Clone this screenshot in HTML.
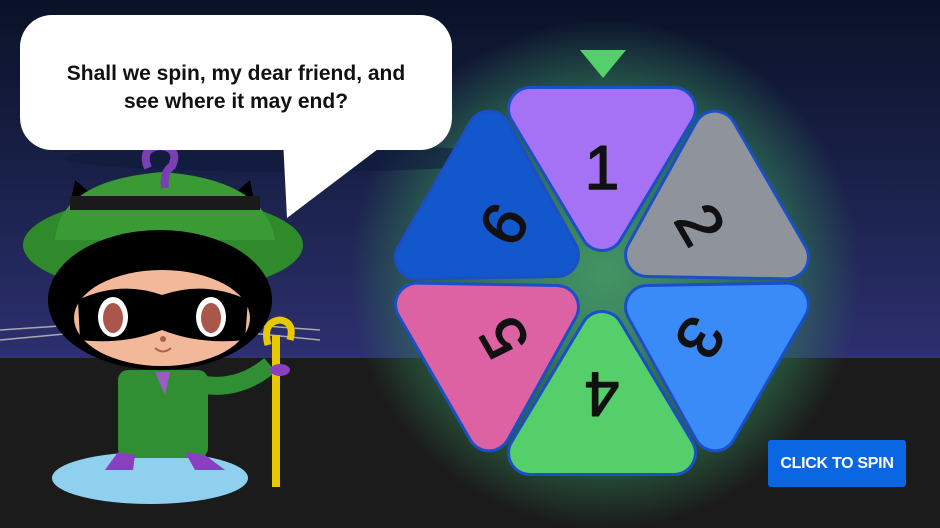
<!DOCTYPE html>
<html><head><meta charset="utf-8"><style>
html,body{margin:0;padding:0;width:940px;height:528px;overflow:hidden;background:#1c1c1c;font-family:"Liberation Sans",sans-serif}
.bg{position:absolute;left:0;top:0;width:940px;height:360px;background:linear-gradient(#0a1228,#1d2450 60%,#2e3070)}
.ground{position:absolute;left:0;top:358px;width:940px;height:170px;background:#1b1b1b}
.glow{position:absolute;left:350px;top:20px;width:510px;height:508px;border-radius:50%;background:radial-gradient(closest-side,rgba(70,160,100,.9),rgba(50,130,85,.65) 70%,rgba(40,100,70,0) 100%)}
.bubble{position:absolute;left:20px;top:15px;width:432px;height:135px;background:#fff;border-radius:32px;text-align:center;font-weight:bold;font-size:21px;line-height:28px;color:#111;box-sizing:border-box;padding-top:45px}
.btn{position:absolute;left:768px;top:440px;width:138px;height:47px;background:#0b66e2;border-radius:3px;color:#fff;font-weight:bold;font-size:16px;line-height:47px;text-align:center;letter-spacing:-.3px}
svg{position:absolute;left:0;top:0}
</style></head><body>
<div class="bg"></div><div class="ground"></div><div class="glow"></div>
<svg width="940" height="528">
<defs><polygon id="t" points="-72,-172 72,-172 0,-52"/></defs>
<ellipse cx="290" cy="158" rx="225" ry="14" fill="#0c1a3a" opacity=".55"/>
<polygon points="283,140 390,140 287,218" fill="#fff"/>
<polygon points="580,50 626,50 603,78" fill="#55cf6a"/>
<g transform="translate(602,281)" font-family="Liberation Sans" font-size="62" text-anchor="middle" fill="#111" stroke-linejoin="round">
<g><use href="#t" fill="#1a4fc8" stroke="#1a4fc8" stroke-width="46"/><use href="#t" fill="#a571f5" stroke="#a571f5" stroke-width="40"/><text x="0" y="-92" stroke="#111" stroke-width="1.5">1</text></g>
<g transform="rotate(60)"><use href="#t" fill="#1a4fc8" stroke="#1a4fc8" stroke-width="46"/><use href="#t" fill="#8e939c" stroke="#8e939c" stroke-width="40"/><text x="0" y="-92" stroke="#111" stroke-width="1.5">2</text></g>
<g transform="rotate(120)"><use href="#t" fill="#1a4fc8" stroke="#1a4fc8" stroke-width="46"/><use href="#t" fill="#3a8af7" stroke="#3a8af7" stroke-width="40"/><text x="0" y="-92" stroke="#111" stroke-width="1.5">3</text></g>
<g transform="rotate(180)"><use href="#t" fill="#1a4fc8" stroke="#1a4fc8" stroke-width="46"/><use href="#t" fill="#55cf6a" stroke="#55cf6a" stroke-width="40"/><text x="0" y="-92" stroke="#111" stroke-width="1.5">4</text></g>
<g transform="rotate(240)"><use href="#t" fill="#1a4fc8" stroke="#1a4fc8" stroke-width="46"/><use href="#t" fill="#dd62a3" stroke="#dd62a3" stroke-width="40"/><text x="0" y="-92" stroke="#111" stroke-width="1.5">5</text></g>
<g transform="rotate(300)"><use href="#t" fill="#1a4fc8" stroke="#1a4fc8" stroke-width="46"/><use href="#t" fill="#1357cc" stroke="#1357cc" stroke-width="40"/><text x="0" y="-92" stroke="#111" stroke-width="1.5">6</text></g>
</g>
<!-- character -->
<ellipse cx="150" cy="478" rx="98" ry="26" fill="#8fd0ee"/>
<g stroke="#aaa" stroke-width="1.5"><line x1="0" y1="330" x2="75" y2="325"/><line x1="0" y1="340" x2="75" y2="333"/><line x1="250" y1="325" x2="320" y2="330"/><line x1="250" y1="333" x2="320" y2="340"/></g>
<polygon points="65,230 75,180 110,210" fill="#000"/><polygon points="260,230 250,180 215,210" fill="#000"/>
<ellipse cx="163" cy="245" rx="140" ry="48" fill="#2e8a2a"/>
<path d="M55,240 Q60,180 163,172 Q265,180 275,240 Z" fill="#3a9a33"/>
<rect x="70" y="196" width="190" height="14" fill="#1a1a1a"/>
<ellipse cx="160" cy="300" rx="112" ry="70" fill="#000"/>
<ellipse cx="162" cy="318" rx="88" ry="48" fill="#f2b89a"/>
<path d="M78,300 Q120,280 162,295 Q205,280 248,300 L245,340 Q200,345 162,330 Q125,345 80,340 Z" fill="#000"/>
<ellipse cx="113" cy="317" rx="15" ry="20" fill="#fff"/><ellipse cx="113" cy="318" rx="10" ry="15" fill="#a9574a"/>
<ellipse cx="211" cy="317" rx="15" ry="20" fill="#fff"/><ellipse cx="211" cy="318" rx="10" ry="15" fill="#a9574a"/>
<circle cx="163" cy="339" r="3" fill="#b06050"/>
<path d="M155,348 Q163,355 171,348" stroke="#b06050" stroke-width="2" fill="none"/>
<path d="M148,168 Q140,148 160,146 Q180,148 172,166 Q163,172 165,188" stroke="#7a3fb0" stroke-width="8" fill="none"/>
<rect x="118" y="370" width="90" height="88" rx="10" fill="#2f8f32"/>
<path d="M205,385 Q240,390 270,365" stroke="#2f8f32" stroke-width="18" fill="none"/>
<polygon points="155,372 170,372 165,395" fill="#9b5cc9"/>
<path d="M105,470 L118,452 L135,455 L133,470 Z" fill="#8a3fc0"/><path d="M195,470 L185,452 L205,455 L225,470 Z" fill="#8a3fc0"/>
<rect x="272" y="335" width="8" height="152" fill="#e8c800"/>
<path d="M268,345 Q262,322 280,320 Q295,322 290,340" stroke="#e8c800" stroke-width="7" fill="none"/>
<ellipse cx="280" cy="370" rx="10" ry="6" fill="#8a3fc0"/>
</svg>
<div class="bubble">Shall we spin, my dear friend, and<br>see where it may end?</div>
<div class="btn">CLICK TO SPIN</div>
</body></html>
